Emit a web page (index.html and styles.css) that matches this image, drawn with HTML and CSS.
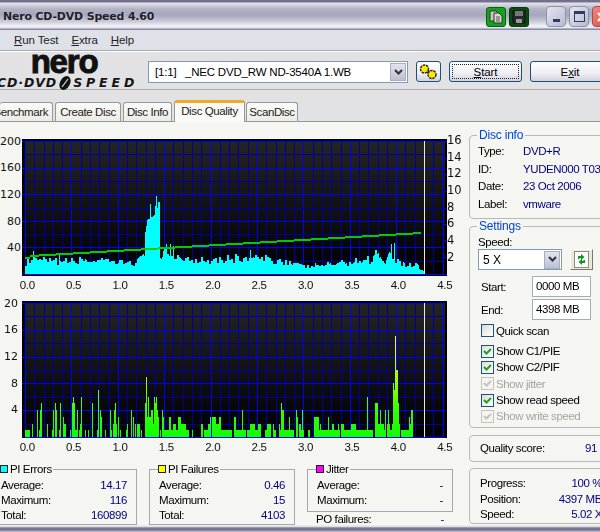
FILE: index.html
```html
<!DOCTYPE html>
<html lang="en">
<head>
    <meta charset="UTF-8">
    <title>Nero CD-DVD Speed 4.60</title>
    <link rel="stylesheet" href="styles.css">
</head>
<body>
    <div class="titlebar">
        <div class="title">Nero CD-DVD Speed 4.60</div>
        <div class="title-icon">
            <svg width="14" height="14" viewBox="0 0 14 14"><path d="M1 1h6l2 2v8H1z" fill="#c8c8c0" stroke="#333"/><path d="M5 3h5l3 3v7H5z" fill="#d8d8d0" stroke="#333"/><path d="M7 7h4M7 9h4M7 11h4" stroke="#555"/></svg>
        </div>
        <div class="title-icon dark">
            <svg width="14" height="14" viewBox="0 0 14 14"><path d="M1 1h12v12H1z" fill="#2a2a2a" stroke="#111"/><path d="M3 1h8v5H3z" fill="#777"/><path d="M4 9h6v4H4z" fill="#999"/></svg>
        </div>
        <div class="win-btn"><span class="min-mark"></span></div>
        <div class="win-btn"><span class="max-mark"></span></div>
        <div class="win-btn close">
            <svg width="12" height="12" viewBox="0 0 12 12"><path d="M2 2l8 8M10 2l-8 8" stroke="#fff" stroke-width="2.4"/></svg>
        </div>
    </div>

    <div class="menubar">
        <span class="menu-cut">File</span>
        <span><u>R</u>un Test</span>
        <span><u>E</u>xtra</span>
        <span><u>H</u>elp</span>
    </div>

    <div class="toolbar">
        <div class="logo">
            <div class="logo-nero">nero</div>
            <div class="logo-line">
                <span class="logo-cd">CD·DVD</span>
                <svg width="16" height="14" viewBox="0 0 16 14"><ellipse cx="8" cy="7" rx="5" ry="7.4" transform="rotate(28 8 7)" fill="#111"/><path d="M5 11L11 3" stroke="#ddd" stroke-width="1.2"/></svg>
                <span class="logo-speed">SPEED</span>
            </div>
        </div>
        <div class="combo drive">
            <span class="combo-text"><span class="drive-id">[1:1]</span>_NEC DVD_RW ND-3540A 1.WB</span>
            <span class="combo-arrow"><svg width="9" height="7" viewBox="0 0 9 7"><path d="M1 1l3.5 3.5L8 1" fill="none" stroke="#333" stroke-width="2"/></svg></span>
        </div>
        <div class="btn icon-btn">
            <svg width="19" height="16" viewBox="0 0 19 16"><path d="M6 5l7 6" stroke="#222" stroke-width="3"/><circle cx="5.5" cy="5" r="4" fill="#ffe800" stroke="#222" stroke-width="1.4" stroke-dasharray="2.5 .8"/><circle cx="13" cy="10.5" r="4" fill="#ffe800" stroke="#222" stroke-width="1.4" stroke-dasharray="2.5 .8"/></svg>
        </div>
        <div class="btn start"><span class="focus"><u>S</u>tart</span></div>
        <div class="btn exit">E<u>x</u>it</div>
    </div>

    <div class="tabs">
        <div class="tab first">Benchmark</div>
        <div class="tab">Create Disc</div>
        <div class="tab">Disc Info</div>
        <div class="tab active">Disc Quality</div>
        <div class="tab">ScanDisc</div>
    </div>

    <div class="main">
        <div class="charts">
            <div class="chart chart-top">
                <div class="y-axis wide">
                    <span>200</span><span>160</span><span>120</span><span>80</span><span>40</span>
                </div>
                <canvas id="piErrors" width="425" height="137"></canvas>
                <div class="y-axis right">
                    <span>16</span><span>14</span><span>12</span><span>10</span><span>8</span><span>6</span><span>4</span><span>2</span>
                </div>
                <div class="x-axis">
                    <span>0.0</span><span>0.5</span><span>1.0</span><span>1.5</span><span>2.0</span><span>2.5</span><span>3.0</span><span>3.5</span><span>4.0</span><span>4.5</span>
                </div>
            </div>
            <div class="chart chart-bottom">
                <div class="y-axis wide narrow">
                    <span>20</span><span>16</span><span>12</span><span>8</span><span>4</span>
                </div>
                <canvas id="piFailures" width="425" height="137"></canvas>
                <div></div>
                <div class="x-axis">
                    <span>0.0</span><span>0.5</span><span>1.0</span><span>1.5</span><span>2.0</span><span>2.5</span><span>3.0</span><span>3.5</span><span>4.0</span><span>4.5</span>
                </div>
            </div>
            <div class="stats">
                <fieldset class="stat-box">
                    <legend><i class="swatch cyan"></i>PI Errors</legend>
                    <div class="row"><span>Average:</span><b>14.17</b></div>
                    <div class="row"><span>Maximum:</span><b>116</b></div>
                    <div class="row"><span>Total:</span><b>160899</b></div>
                </fieldset>
                <fieldset class="stat-box">
                    <legend><i class="swatch yellow"></i>PI Failures</legend>
                    <div class="row"><span>Average:</span><b>0.46</b></div>
                    <div class="row"><span>Maximum:</span><b>15</b></div>
                    <div class="row"><span>Total:</span><b>4103</b></div>
                </fieldset>
                <div class="jitter-col">
                    <fieldset class="stat-box jitter">
                        <legend><i class="swatch magenta"></i>Jitter</legend>
                        <div class="row"><span>Average:</span><b>-</b></div>
                        <div class="row"><span>Maximum:</span><b>-</b></div>
                    </fieldset>
                    <div class="row po"><span>PO failures:</span><b>-</b></div>
                </div>
            </div>
        </div>

        <div class="side">
            <fieldset class="group disc-info">
                <legend>Disc info</legend>
                <div class="info"><span>Type:</span><b>DVD+R</b></div>
                <div class="info"><span>ID:</span><b>YUDEN000 T03</b></div>
                <div class="info"><span>Date:</span><b>23 Oct 2006</b></div>
                <div class="info"><span>Label:</span><b>vmware</b></div>
            </fieldset>
            <fieldset class="group settings">
                <legend>Settings</legend>
                <div class="speed-label">Speed:</div>
                <div class="speed-row">
                    <div class="combo speed">
                        <span class="combo-text">5 X</span>
                        <span class="combo-arrow"><svg width="9" height="7" viewBox="0 0 9 7"><path d="M1 1l3.5 3.5L8 1" fill="none" stroke="#333" stroke-width="2"/></svg></span>
                    </div>
                    <div class="refresh">
                        <svg width="15" height="17" viewBox="0 0 15 17"><path d="M.5.5h14v16H.5z" fill="#fff" stroke="#222" stroke-dasharray="1 1"/><path d="M4 8V5h3V3l3.5 3L7 9V7H5.5v1zM11 9v3H8v2l-3.5-3L8 8v2h1.5V9z" fill="#0a9a1a"/></svg>
                    </div>
                </div>
                <div class="field"><span>Start:</span><div class="input">0000 MB</div></div>
                <div class="field"><span>End:</span><div class="input">4398 MB</div></div>
                <div class="check quick"><i class="box"></i>Quick scan</div>
                <div class="checks">
                    <div class="check"><i class="box"><svg width="11" height="11" viewBox="0 0 11 11"><path d="M2 5l2.5 2.5L9 3" fill="none" stroke="#21a121" stroke-width="2"/></svg></i>Show C1/PIE</div>
                    <div class="check"><i class="box"><svg width="11" height="11" viewBox="0 0 11 11"><path d="M2 5l2.5 2.5L9 3" fill="none" stroke="#21a121" stroke-width="2"/></svg></i>Show C2/PIF</div>
                    <div class="check off"><i class="box"><svg width="11" height="11" viewBox="0 0 11 11"><path d="M2 5l2.5 2.5L9 3" fill="none" stroke="#c4c4bc" stroke-width="2"/></svg></i>Show jitter</div>
                    <div class="check"><i class="box"><svg width="11" height="11" viewBox="0 0 11 11"><path d="M2 5l2.5 2.5L9 3" fill="none" stroke="#21a121" stroke-width="2"/></svg></i>Show read speed</div>
                    <div class="check off"><i class="box"><svg width="11" height="11" viewBox="0 0 11 11"><path d="M2 5l2.5 2.5L9 3" fill="none" stroke="#c4c4bc" stroke-width="2"/></svg></i>Show write speed</div>
                </div>
            </fieldset>
            <div class="group quality">
                <div class="row"><span>Quality score:</span><b>91</b></div>
            </div>
            <div class="group progress">
                <div class="row"><span>Progress:</span><b>100 %</b></div>
                <div class="row"><span>Position:</span><b>4397 MB</b></div>
                <div class="row"><span>Speed:</span><b>5.02 X</b></div>
            </div>
        </div>
    </div>

    <div class="bottom-edge"></div>

    <script src="script.js"></script>
</body>
</html>
```

FILE: styles.css
```css
* {
    box-sizing: border-box;
}
html, body {
    margin: 0;
    height: 532px;
    overflow: hidden;
}
body {
    width: 600px;
    background-color: #f5f5f1;
    font-family: "Liberation Sans", Arial, sans-serif;
    font-size: 11.5px;
    letter-spacing: -0.4px;
    color: #000;
}

/* title bar */
.titlebar {
    display: flex;
    align-items: flex-start;
    height: 30px;
    padding-top: 6px;
    background: linear-gradient(#6e6e8c 0, #74748f 2px, #e4e4ec 3px, #b2b2c6 9px, #a6a6bc 15px, #c6c6d6 21px, #f2f2f6 26px, #e0e0e8 28px, #8a8aa4 29px);
}
.title {
    flex: none;
    width: 486px;
    padding: 2px 0 0 3px;
    font-family: "DejaVu Sans", sans-serif;
    font-weight: bold;
    font-size: 11px;
    letter-spacing: -0.2px;
    line-height: 18px;
    color: #20202a;
    text-shadow: 1px 1px 0 #c8c8d4;
}
.title-icon {
    display: flex;
    justify-content: center;
    align-items: center;
    flex: none;
    width: 20px;
    height: 20px;
    margin: 1px 3px 0 0;
    background: #0fa51a;
    border: 1px solid #0b5f12;
    border-radius: 3px;
}
.title-icon.dark {
    margin-right: 17px;
    background: #0a4a10;
    border-color: #083a0c;
}
.win-btn {
    display: flex;
    justify-content: center;
    align-items: center;
    flex: none;
    width: 20px;
    height: 21px;
    margin-right: 3px;
    background: linear-gradient(135deg, #e4e5f0, #b8bacf);
    border: 1px solid #8f93a8;
    border-radius: 4px;
}
.win-btn.close {
    background: linear-gradient(135deg, #f08a80, #d84a3c);
    border-color: #a84a48;
}
.min-mark {
    width: 7px;
    height: 3px;
    margin-top: 8px;
    background: #2f3a68;
}
.max-mark {
    width: 11px;
    height: 11px;
    border: 1px solid #2f3a68;
    border-top-width: 3px;
}

/* menu */
.menubar {
    display: flex;
    height: 20px;
    margin-left: -18px;
    padding-top: 3px;
    background-color: #dfe1e9;
    font-size: 11.5px;
    letter-spacing: -0.1px;
    line-height: 14px;
    color: #222;
}
.menubar span {
    margin-right: 13px;
}
.menu-cut {
    width: 19px;
}

/* toolbar with logo */
.toolbar {
    display: flex;
    align-items: flex-start;
    height: 40px;
    border-top: 1px solid #a8a8a8;
    border-bottom: 1px solid #b0b0b0;
    background-color: #e2e1e4;
    box-shadow: inset 0 1px 0 #fff;
}
.logo {
    flex: none;
    width: 148px;
    margin-left: -3px;
    letter-spacing: 0;
}
.logo-nero {
    height: 25px;
    padding-right: 14px;
    font-size: 33px;
    font-weight: bold;
    line-height: 21px;
    letter-spacing: -1.2px;
    text-align: center;
    color: #111;
    -webkit-text-stroke: 1px #111;
}
.logo-line {
    display: flex;
    align-items: center;
    font-family: "DejaVu Sans", sans-serif;
    font-size: 12.5px;
    font-weight: bold;
    font-style: italic;
    line-height: 14px;
    color: #151515;
}
.logo-cd {
    letter-spacing: 0.9px;
}
.logo-speed {
    letter-spacing: 3.9px;
}
.combo {
    display: flex;
    align-items: center;
    justify-content: space-between;
    flex: none;
    height: 22px;
    padding: 0 1px 0 6px;
    background-color: #fff;
    border: 1px solid #7f9db9;
    line-height: 18px;
}
.combo.drive {
    width: 260px;
    margin: 10px 8px 0 3px;
    font-size: 11.5px;
    letter-spacing: -0.2px;
}
.drive-id {
    display: inline-block;
    width: 30px;
}
.combo-arrow {
    display: flex;
    align-items: center;
    justify-content: center;
    width: 16px;
    height: 18px;
    background: linear-gradient(#e2e4ee, #bcc0d2);
    border: 1px solid #a8aec4;
}
.btn {
    display: flex;
    align-items: center;
    justify-content: center;
    flex: none;
    height: 21px;
    margin-top: 10px;
    background: linear-gradient(#fff, #eeeef4 60%, #d2d2e0);
    border: 1px solid #1d4f7c;
    border-radius: 3px;
    font-size: 11.5px;
    letter-spacing: -0.1px;
}
.icon-btn {
    width: 25px;
    margin-right: 8px;
}
.start {
    width: 73px;
    margin-right: 8px;
    padding: 2px;
}
.focus {
    display: block;
    width: 100%;
    height: 100%;
    border: 1px dotted #222;
    text-align: center;
    line-height: 14px;
}
.exit {
    width: 80px;
}

/* tabs */
.tabs {
    display: flex;
    align-items: flex-end;
    height: 32px;
    border-bottom: 1px solid #919b9c;
    background-color: #e2e1e4;
}
.tab {
    flex: none;
    height: 19px;
    margin-right: 2px;
    padding: 0;
    background: linear-gradient(#fbfbf9, #ecebe4);
    border: 1px solid #919b9c;
    border-bottom: 0;
    border-radius: 3px 3px 0 0;
    line-height: 18px;
    text-align: center;
    color: #222;
    white-space: nowrap;
}
.tab.first {
    display: flex;
    justify-content: flex-end;
    width: 53px;
    padding: 0 4px 0 0;
    overflow: hidden;
    border-left: 0;
}
.tab:nth-child(2) {
    width: 66px;
}
.tab:nth-child(3) {
    width: 49px;
}
.tab.active {
    width: 71px;
    height: 22px;
    margin: 0 1px -1px 0;
    background: #fafaf6;
    border-top: 3px solid #f0a828;
    line-height: 16px;
}
.tab:last-child {
    width: 52px;
}

/* charts */
.main {
    display: flex;
    height: 403px;
}
.charts {
    flex: none;
    width: 469px;
}
.chart {
    display: grid;
    grid-template-columns: 22px 425px 22px;
}
.chart-top {
    margin-top: 17px;
}
.chart-bottom {
    margin-top: 9px;
}
.y-axis {
    display: flex;
    flex-direction: column;
    font-family: "DejaVu Sans", sans-serif;
    font-size: 11px;
    letter-spacing: 0;
    color: #111;
}
.y-axis.wide {
    margin-top: -10.3px;
    padding-right: 1px;
    text-align: right;
}
.y-axis.narrow {
    padding-right: 4px;
}
.y-axis.wide span {
    height: 26.7px;
    line-height: 26.7px;
}
.y-axis.right {
    margin-top: -7px;
}
.y-axis.right span {
    height: 16.67px;
    line-height: 16.67px;
    font-size: 11.5px;
}
.chart canvas {
    display: block;
}
.x-axis {
    display: flex;
    grid-column: 1 / 4;
    height: 14px;
    margin: 2px 0 0 4px;
    letter-spacing: -0.3px;
    line-height: 14px;
    color: #111;
}
.x-axis span {
    flex: none;
    width: 46.4px;
    text-align: center;
}
.stats {
    display: flex;
    margin: 9px 0 0 -9px;
}

/* group boxes */
fieldset {
    margin: 0;
    min-width: 0;
}
legend {
    padding: 0 2px;
    line-height: 13px;
}
.stat-box {
    flex: none;
    width: 146px;
    height: 62px;
    margin-right: 12px;
    padding: 2px 9px 0;
    border: 1px solid #a5a8ad;
}
.stat-box legend {
    margin-left: -1px;
    padding: 0 1px 0 0;
}
.swatch {
    display: inline-block;
    width: 8px;
    height: 8px;
    margin-right: 2px;
    border: 1px solid #222;
}
.swatch.cyan {
    background-color: #00ffff;
}
.swatch.yellow {
    background-color: #ffff00;
}
.swatch.magenta {
    background-color: #ff00ff;
}
.row {
    display: flex;
    justify-content: space-between;
    height: 15px;
    line-height: 15px;
    white-space: nowrap;
}
.row b {
    font-weight: normal;
    color: #000080;
}
.jitter-col {
    flex: none;
    width: 146px;
}
.stat-box.jitter {
    height: 49px;
    margin: 0;
}
.row.po {
    padding: 0 9px;
}

/* right column */
.side {
    flex: none;
    width: 140px;
    padding-top: 7px;
}
.group {
    width: 135px;
    margin-bottom: 6px;
    padding: 0 5px 0 8px;
    border: 1px solid #b8b8b8;
    border-radius: 4px;
}
.group legend {
    margin-left: -1px;
    font-size: 12px;
    letter-spacing: -0.2px;
    color: #0046d5;
}
.disc-info {
    height: 90px;
    margin-bottom: 1px;
    padding-top: 0;
}
.info {
    display: flex;
    height: 17.7px;
    line-height: 18px;
    white-space: nowrap;
}
.info span {
    width: 45px;
    flex: none;
}
.info b {
    font-weight: normal;
    color: #000080;
}
.settings {
    height: 208px;
    margin-bottom: 7px;
}
.speed-label {
    height: 15px;
    margin-top: 2px;
    line-height: 15px;
}
.speed-row {
    display: flex;
    margin-top: -1px;
}
.combo.speed {
    width: 84px;
    height: 21px;
    padding-left: 4px;
    font-size: 12px;
    letter-spacing: 0;
}
.refresh {
    display: flex;
    align-items: center;
    justify-content: center;
    flex: none;
    width: 23px;
    height: 21px;
    margin-left: 8px;
    background-color: #ece9d8;
    border: 1px solid;
    border-color: #fff #777 #777 #fff;
}
.field {
    display: flex;
    align-items: center;
    height: 21px;
    margin: 2px 0 0 3px;
}
.speed-row + .field {
    margin-top: 6px;
}
.field span {
    width: 51px;
}
.input {
    width: 59px;
    height: 21px;
    padding-left: 3px;
    background-color: #fff;
    border: 1px solid #a5acb2;
    line-height: 18px;
}
.check {
    display: flex;
    align-items: center;
    height: 16.3px;
    margin-left: 3px;
    white-space: nowrap;
}
.check.quick {
    height: 13px;
    margin-top: 4px;
}
.checks {
    margin-top: 6px;
}
.check.off {
    color: #a6a6a0;
}
.box {
    display: block;
    flex: none;
    width: 13px;
    height: 13px;
    margin-right: 2px;
    background: linear-gradient(135deg, #dcdcd6, #fff);
    border: 1px solid #1c5180;
}
.box svg {
    display: block;
}
.off .box {
    border-color: #c4c4bc;
    background: #f4f4f0;
}
.quality {
    height: 27px;
    padding: 5px 6px 0 10px;
}
.progress {
    height: 56px;
    margin: 0;
    padding: 7px 1px 0 10px;
}
.progress .row {
    height: 15.5px;
}

.bottom-edge {
    height: 7px;
    background: linear-gradient(#f0f0f0 0, #d8d8d8 2px, #5c5c7c 3px, #8e8ea8 4px, #5c5c7c 5px, #b8b8c8 6px);
}
```

FILE: script.js
```js
// plots for the two disc quality charts
const LEFT = 3;
const COL = 46.4 / 5;

function seeded(seed) {
    let s = seed;
    return function () {
        s = (s * 16807) % 2147483647;
        return s / 2147483647;
    };
}

function drawGrid(ctx, top, bottom, rowPx, rows) {
    const grad = ctx.createLinearGradient(0, top, 0, bottom);
    grad.addColorStop(0, '#242424');
    grad.addColorStop(1, '#000');
    ctx.fillStyle = '#000';
    ctx.fillRect(0, 0, 425, 137);
    ctx.fillStyle = grad;
    ctx.fillRect(LEFT, top, 420, bottom - top);

    for (let i = 0; i <= 45; i++) {
        const x = Math.round(LEFT + i * COL);
        ctx.fillStyle = i % 5 === 0 ? '#0000ff' : '#0000a0';
        ctx.fillRect(x, top, 1, bottom - top);
    }
    for (let i = 0; i <= rows; i++) {
        const y = Math.round(top + i * rowPx);
        ctx.fillStyle = i % 2 === 0 ? '#0000ff' : '#0000a0';
        ctx.fillRect(LEFT, y, 420, 1);
        if (i % 2 === 0) {
            ctx.fillStyle = '#0000ff';
            ctx.fillRect(0, y, 3, 1);
        }
    }
}

// height of the error bars, read off the picture: [x, height]
const envelope = [
    [0, 12], [8, 15], [30, 13], [60, 15], [90, 12], [110, 13], [119, 18], [120, 42],
    [122, 54], [128, 58], [130, 60], [134, 72], [135, 16], [139, 22], [150, 20], [160, 16],
    [190, 16], [225, 17], [260, 14], [278, 8], [300, 10], [325, 13], [345, 16], [350, 22],
    [355, 23], [360, 10], [364, 23], [372, 14], [380, 10], [392, 10], [396, 4], [400, 3]
];
const peaks = { 8: 23, 34: 21, 125: 70, 130: 68, 131: 78, 133: 72, 141: 30, 145: 30, 148: 28, 225: 24, 291: 9, 366: 30, 369: 31 };

function envelopeAt(x) {
    for (let i = 1; i < envelope.length; i++) {
        const a = envelope[i - 1];
        const b = envelope[i];
        if (x <= b[0]) {
            return a[1] + (b[1] - a[1]) * (x - a[0]) / (b[0] - a[0]);
        }
    }
    return 0;
}

function drawErrors() {
    const ctx = document.getElementById('piErrors').getContext('2d');
    const top = 2;
    const bottom = 135;
    drawGrid(ctx, top, bottom, 133 / 10, 10);

    const rnd = seeded(4242);
    let noise = 1;
    ctx.fillStyle = '#00ffff';
    for (let x = 0; x < 400; x++) {
        let h = envelopeAt(x);
        if (x % 2 === 0) noise = 0.65 + rnd() * 0.55;
        if (x < 119 || x > 135) h = h * noise;
        if (peaks[x]) h = peaks[x];
        ctx.fillRect(LEFT + x, Math.round(bottom - h), 1, Math.round(h));
    }

    // read speed
    ctx.fillStyle = '#00cc00';
    ctx.fillRect(LEFT, bottom - 17, 5, 2);
    for (let x = 5; x < 396; x++) {
        const y = Math.round(116 - (x - 5) * 23 / 391);
        ctx.fillRect(LEFT + x, y, 1, 2);
    }

    ctx.fillStyle = '#e8e8e8';
    ctx.fillRect(402, top, 1, bottom - top);
    ctx.fillStyle = '#0000ff';
    ctx.fillRect(LEFT, bottom, 420, 1);
    for (let i = 0; i <= 8; i++) {
        ctx.fillRect(421, Math.round(top + i * 16.63), 4, 1);
    }
}

// bars before the dense part and the tall ones after it: [x, value]
const failures = [
    [0, 1], [1, 1], [2, 1], [3, 1], [4, 1], [7, 2], [12, 4], [14, 1], [15, 4], [16, 5], [22, 2],
    [27, 1], [28, 4], [30, 5], [31, 4], [34, 1], [35, 5], [38, 3], [39, 2], [40, 2], [45, 1], [47, 5],
    [48, 6], [49, 5], [50, 1], [51, 1], [52, 4], [54, 1], [55, 2], [56, 6], [60, 1], [63, 1], [67, 5],
    [72, 1], [73, 7], [75, 4], [76, 3], [80, 1], [85, 4], [86, 1], [88, 2], [89, 4], [90, 5], [91, 2],
    [93, 3], [95, 1], [101, 1], [102, 2], [106, 4], [108, 3], [110, 2], [112, 2], [113, 2], [114, 2],
    [116, 1], [120, 5], [121, 9], [122, 3], [123, 6], [124, 3], [125, 3], [126, 4], [127, 4], [128, 2],
    [129, 6], [130, 5], [131, 6], [132, 4], [133, 3], [135, 1], [137, 4], [138, 3]
];
const tall = {
    217: 4, 231: 1, 256: 5, 257: 4, 258: 4, 264: 3, 271: 4, 272: 3, 277: 4, 342: 6, 350: 5, 351: 5, 352: 5,
    355: 4, 360: 4, 363: 4, 368: 8, 369: 7, 370: 15, 371: 10, 372: 10, 373: 5, 386: 4, 387: 4
};

function drawFailures() {
    const ctx = document.getElementById('piFailures').getContext('2d');
    const top = 2;
    const bottom = 136;
    drawGrid(ctx, top, bottom, 13.4, 10);

    const bars = {};
    failures.forEach(function (b) { bars[b[0]] = b[1]; });
    const rnd = seeded(977);
    let value = 1;
    for (let x = 139; x < 388; x++) {
        // values hold for a few columns, so they merge into blocks
        if (rnd() > 0.55) {
            const r = rnd();
            value = r < 0.16 ? 0 : r < 0.72 ? 1 : r < 0.93 ? 2 : 3;
        }
        bars[x] = value;
    }
    Object.keys(tall).forEach(function (x) { bars[x] = tall[x]; });

    const grad = ctx.createLinearGradient(0, bottom, 0, bottom - 100);
    grad.addColorStop(0, '#10ff00');
    grad.addColorStop(0.25, '#30ff00');
    grad.addColorStop(0.6, '#a0ff00');
    grad.addColorStop(1, '#ffff00');
    ctx.fillStyle = grad;
    Object.keys(bars).forEach(function (x) {
        const h = Math.round(bars[x] * 6.7);
        ctx.fillRect(LEFT + Number(x), bottom - h, 1, h);
    });

    ctx.fillStyle = '#e8e8e8';
    ctx.fillRect(402, top, 1, bottom - top);
}

drawErrors();
drawFailures();
```
